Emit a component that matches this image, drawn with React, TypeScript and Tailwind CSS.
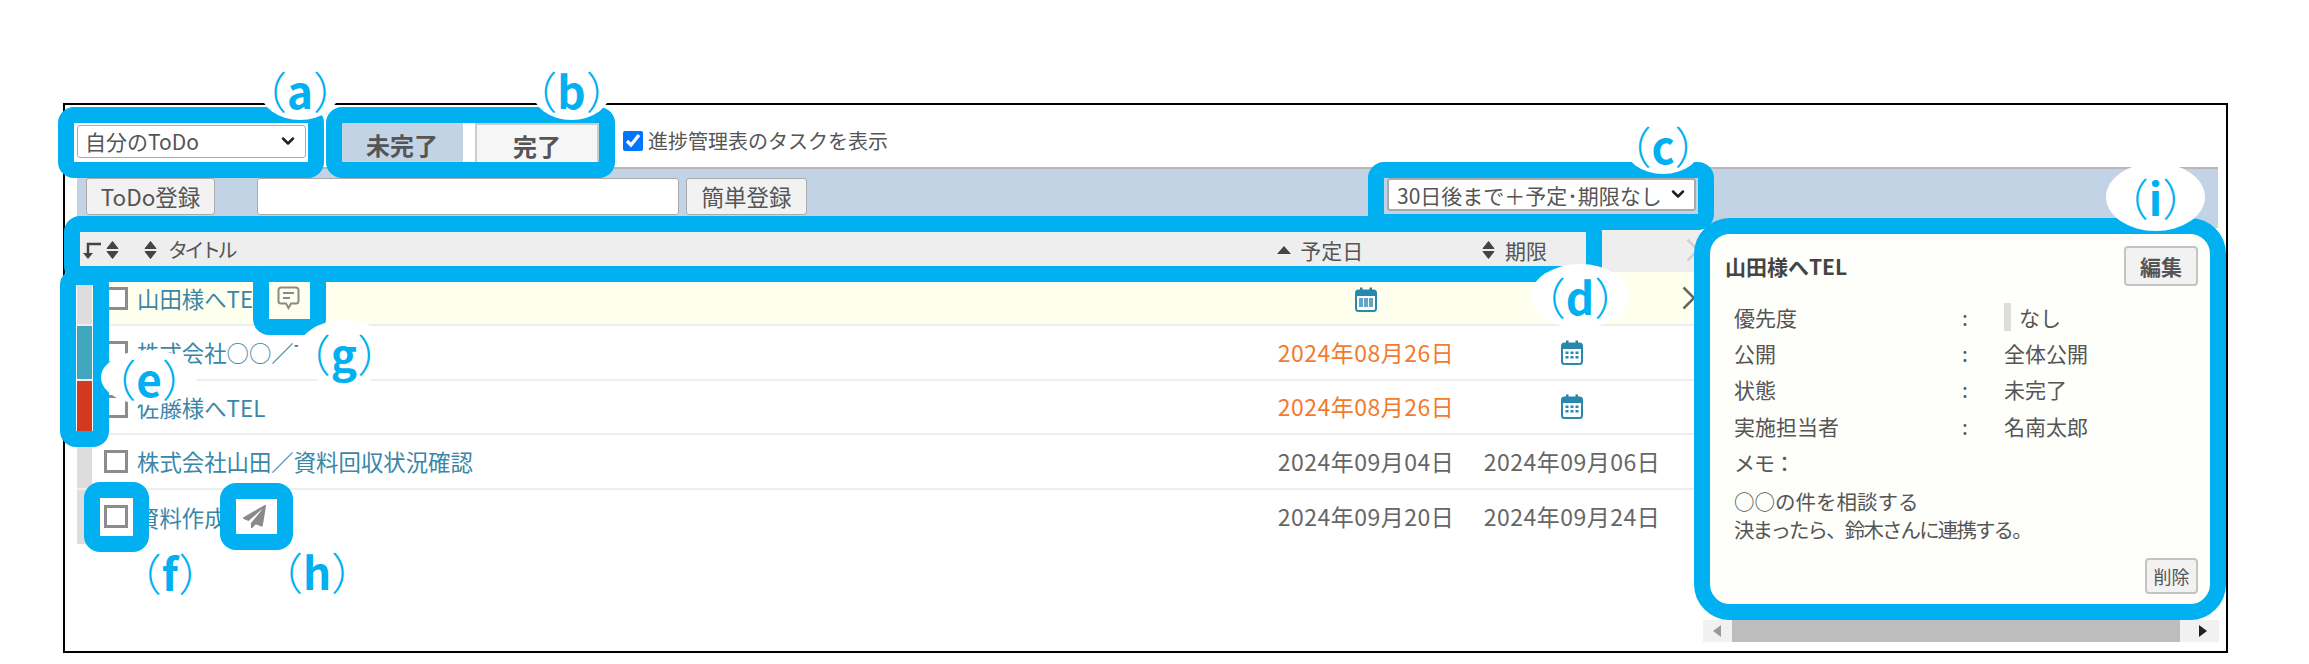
import { ChevronDown } from "lucide-react";
import { FaPaperPlane } from "react-icons/fa";

const SortIcon = () => (
    <svg width="13" height="20" viewBox="0 0 13 20" fill="#444" stroke="#444" strokeWidth="1" strokeLinejoin="round">
        <path d="M6.5 1.5 L12 8.5 H1 Z" />
        <path d="M6.5 18.5 L12 11.5 H1 Z" />
    </svg>
);

const CalendarIcon = ({ dense }: { dense?: boolean }) => (
    <svg width="22" height="25" viewBox="0 0 22 25">
        <rect x="5" y="0.5" width="2.5" height="5" fill="#2b7fa3" />
        <rect x="14.5" y="0.5" width="2.5" height="5" fill="#2b7fa3" />
        <rect x="1" y="3.5" width="20" height="20.5" rx="2.5" fill="#fff" stroke="#2b88ad" strokeWidth="2" />
        <rect x="1" y="3.5" width="20" height="5.5" fill="#2b88ad" />
        {dense ? (
            <g fill="#2b88ad">
                <rect x="4.5" y="11.5" width="3" height="2.5" />
                <rect x="9.5" y="11.5" width="3" height="2.5" />
                <rect x="14.5" y="11.5" width="3" height="2.5" />
                <rect x="4.5" y="16" width="3" height="2.5" />
                <rect x="9.5" y="16" width="3" height="2.5" />
                <rect x="14.5" y="16" width="3" height="2.5" />
            </g>
        ) : (
            <g fill="#5fa7c4">
                <rect x="4" y="11" width="14" height="9" />
                <rect x="8" y="11" width="1" height="9" fill="#fff" />
                <rect x="13" y="11" width="1" height="9" fill="#fff" />
            </g>
        )}
    </svg>
);

const Chevron = ({ color }: { color: string }) => (
    <svg width="14" height="24" viewBox="0 0 14 24" fill="none" stroke={color} strokeWidth="2.5">
        <path d="M1.5 1.5 L12 12 L1.5 22.5" />
    </svg>
);

const ChatIcon = () => (
    <svg width="23" height="24" viewBox="0 0 23 24" fill="none" stroke="#8a8a8a" strokeWidth="2">
        <path d="M4 1.5 H19 A2.5 2.5 0 0 1 21.5 4 V15 A2.5 2.5 0 0 1 19 17.5 H14 L11.5 22 L9 17.5 H4 A2.5 2.5 0 0 1 1.5 15 V4 A2.5 2.5 0 0 1 4 1.5 Z" />
        <path d="M6 7 H17 M6 12 H13" />
    </svg>
);

const Check = () => (
    <input
        type="checkbox"
        className="block appearance-none w-[24px] h-[23px] border-[3px] border-[#8c8c8c] bg-white shrink-0"
    />
);

const Label = ({ letter, className }: { letter: string; className: string }) => (
    <div
        className={`absolute flex items-center justify-center rounded-[50%] bg-white text-[#00b0f0] text-[44px] leading-none ${className}`}
    >
        <span className="font-light -ml-[22px]">（</span>
        <span className="font-bold">{letter}</span>
        <span className="font-light -mr-[22px]">）</span>
    </div>
);

const rows = [
    { title: "山田様へTEL", bar: "bg-[#dddddd]", bg: "bg-[#ffffee]", due: "", limit: "" },
    { title: "株式会社○○／TEL", bar: "bg-[#3fa6bd]", bg: "bg-white", due: "2024年08月26日", limit: "" },
    { title: "佐藤様へTEL", bar: "bg-[#d13a1e]", bg: "bg-white", due: "2024年08月26日", limit: "" },
    { title: "株式会社山田／資料回収状況確認", bar: "bg-[#dddddd]", bg: "bg-white", due: "2024年09月04日", limit: "2024年09月06日" },
    { title: "資料作成", bar: "bg-[#dddddd]", bg: "bg-white", due: "2024年09月20日", limit: "2024年09月24日" },
];

const details = [
    { label: "優先度", value: "なし", mark: true },
    { label: "公開", value: "全体公開" },
    { label: "状態", value: "未完了" },
    { label: "実施担当者", value: "名南太郎" },
];

const App = () => {
    return (
        <div className="relative w-[2309px] h-[664px] overflow-hidden bg-white pt-[103px] pl-[63px] font-['Noto_Sans_CJK_JP',sans-serif] text-[#555]">
            <div className="w-[2165px] h-[550px] border-2 border-black pl-[12px]">
                {/* filter row */}
                <div className="flex h-[62px] items-end">
                    <div className="relative mb-[9px] w-[229px]">
                        <select className="block h-[33px] w-full appearance-none rounded-[3px] border border-[#aaa] bg-white pl-[7px] text-[21px] text-[#555]">
                            <option>自分のToDo</option>
                        </select>
                        <ChevronDown size={20} strokeWidth={3} className="absolute right-[8px] top-[6px] text-[#222]" />
                    </div>
                    <div className="ml-[35px] flex h-[44px] w-[122px] items-center justify-center bg-[#c2d3e6] text-[24px] font-bold text-[#555]">
                        未完了
                    </div>
                    <div className="ml-[12px] flex h-[44px] w-[124px] items-center justify-center border-2 border-b-0 border-[#ccc] bg-[#f6f6f6] text-[24px] font-bold text-[#555]">
                        完了
                    </div>
                    <label className="ml-[24px] mb-[16px] flex items-center gap-[5px] text-[20px] leading-none">
                        <input type="checkbox" defaultChecked className="w-[20px] h-[20px]" />
                        進捗管理表のタスクを表示
                    </label>
                </div>

                {/* register row */}
                <div className="flex h-[61px] w-[2141px] items-start border-t-2 border-[#b8b8b8] bg-[#c2d3e6] pl-[9px] pt-[9px]">
                    <button className="h-[37px] w-[129px] rounded-[3px] border border-[#aaa] bg-[#f2f2f2] text-[22.5px] leading-none">
                        ToDo登録
                    </button>
                    <input className="ml-[42px] h-[37px] w-[422px] rounded-[3px] border border-[#aaa] bg-white" />
                    <button className="ml-[7px] h-[37px] w-[121px] rounded-[3px] border border-[#aaa] bg-[#f2f2f2] text-[22.5px] leading-none">
                        簡単登録
                    </button>
                    <div className="relative ml-[580px] w-[309px]">
                        <select className="block h-[33px] w-full appearance-none rounded-[3px] border-2 border-[#aaa] bg-white pl-[8px] text-[21px] text-[#555]">
                            <option>30日後まで＋予定･期限なし</option>
                        </select>
                        <ChevronDown size={20} strokeWidth={3} className="absolute right-[8px] top-[6px] text-[#222]" />
                    </div>
                </div>

                <div className="flex">
                    {/* task list */}
                    <div className="w-[1623px]">
                        <div className="flex h-[44px] items-center bg-[#eeeeee] text-[20px] leading-none">
                            <svg className="ml-[4px]" width="22" height="20" viewBox="0 0 22 20" fill="none" stroke="#444" strokeWidth="2.5">
                                <path d="M20 4 H7 V14" />
                                <path d="M2 13 H12 L7 19 Z" fill="#444" stroke="none" />
                            </svg>
                            <span className="ml-[3px]"><SortIcon /></span>
                            <span className="ml-[25px]"><SortIcon /></span>
                            <span className="ml-[11px] w-[1110px] tracking-[-3.5px]">タイトル</span>
                            <svg width="14" height="8" viewBox="0 0 14 8" fill="#444">
                                <path d="M7 0 L14 8 H0 Z" />
                            </svg>
                            <span className="ml-[9px] w-[182px] text-[21px]">予定日</span>
                            <SortIcon />
                            <span className="ml-[10px] w-[181px] text-[21px]">期限</span>
                            <Chevron color="#cfcfcf" />
                        </div>
                        {rows.map((row, i) => (
                            <div
                                key={i}
                                className={`flex h-[54.4px] items-center ${i < 4 ? "border-b-2 border-[#eeeeee]" : ""} ${row.bg}`}
                            >
                                <div className={`h-full w-[15px] shrink-0 ${row.bar}`} />
                                <div className="ml-[12px]"><Check /></div>
                                <div className="ml-[9px] flex w-[1141px] items-center text-[22.4px] leading-none text-[#3a86a8]">
                                    {row.title}
                                    {i === 0 && <span className="ml-[12px]"><ChatIcon /></span>}
                                    {i === 4 && <FaPaperPlane className="ml-[16px] text-[23px] text-[#8a8a8a]" />}
                                </div>
                                <div className={`flex w-[176px] justify-center text-[23px] leading-none tracking-[0.5px] whitespace-nowrap ${i < 3 ? "text-[#f47a2e]" : "text-[#666]"}`}>
                                    {i === 0 ? <span className="mt-[3px]"><CalendarIcon /></span> : row.due}
                                </div>
                                <div className="ml-[30px] flex w-[176px] justify-center text-[23px] leading-none tracking-[0.5px] whitespace-nowrap text-[#666]">
                                    {i === 1 || i === 2 ? <CalendarIcon dense /> : row.limit}
                                </div>
                                {i === 0 && <div className="ml-[22px]"><Chevron color="#666" /></div>}
                            </div>
                        ))}
                    </div>

                    {/* detail pane */}
                    <div className="ml-[3px] flex h-[414px] w-[516px] flex-col">
                        <div className="h-[392px] bg-[#fefefb] pt-[18px] text-[21px] leading-none">
                            <div className="flex items-center justify-between pl-[22px] pr-[21px]">
                                <span className="font-bold text-[#444]">山田様へTEL</span>
                                <button className="h-[40px] w-[74px] rounded-[4px] border-2 border-[#c4c4c4] bg-[#f2f2f2] font-bold">
                                    編集
                                </button>
                            </div>
                            <div className="mt-[13px] pl-[31px]">
                                {details.map((d) => (
                                    <div key={d.label} className="flex h-[36.4px] items-center">
                                        <span className="w-[228px]">{d.label}</span>
                                        <span className="w-[42px]">:</span>
                                        {d.mark && <span className="mr-[8px] h-[28px] w-[7px] bg-[#dddddd]" />}
                                        <span>{d.value}</span>
                                    </div>
                                ))}
                                <div className="flex h-[36px] items-center tracking-[-1px]">メモ：</div>
                                <p className="mt-[6px] text-[20.5px] leading-[28px]">
                                    ○○の件を相談する
                                    <br />
                                    <span className="tracking-[-1.9px]">決まったら、鈴木さんに連携する。</span>
                                </p>
                            </div>
                            <div className="mt-[15px] flex justify-end pr-[21px]">
                                <button className="h-[36px] w-[53px] rounded-[4px] border-2 border-[#c4c4c4] bg-[#f2f2f2] text-[18px]">
                                    削除
                                </button>
                            </div>
                        </div>
                        <div className="flex h-[22px] items-center bg-[#f1f1f1]">
                            <svg className="ml-[10px]" width="8" height="12" viewBox="0 0 8 12" fill="#9a9a9a">
                                <path d="M8 0 V12 L0 6 Z" />
                            </svg>
                            <div className="ml-[11px] h-full w-[448px] bg-[#bdbdbd]" />
                            <svg className="ml-[19px]" width="8" height="12" viewBox="0 0 8 12" fill="#222">
                                <path d="M0 0 V12 L8 6 Z" />
                            </svg>
                        </div>
                    </div>
                </div>
            </div>

            {/* annotation boxes */}
            <div className="absolute left-[58px] top-[107px] h-[71px] w-[266px] rounded-[16px] border-[16px] border-[#00b0f0]" />
            <div className="absolute left-[326px] top-[107px] h-[71px] w-[289px] rounded-[16px] border-[16px] border-[#00b0f0]" />
            <div className="absolute left-[1368px] top-[162px] h-[68px] w-[346px] rounded-[16px] border-[16px] border-[#00b0f0]" />
            <div className="absolute left-[64px] top-[216px] h-[66px] w-[1538px] rounded-[16px] border-[16px] border-[#00b0f0]" />
            <div className="absolute left-[60px] top-[269px] h-[178px] w-[49px] rounded-[16px] border-[16px] border-[#00b0f0]" />
            <div className="absolute left-[84px] top-[482px] h-[70px] w-[65px] rounded-[16px] border-[16px] border-[#00b0f0]" />
            <div className="absolute left-[253px] top-[266px] h-[69px] w-[73px] rounded-[16px] border-[16px] border-[#00b0f0]" />
            <div className="absolute left-[220px] top-[483px] h-[67px] w-[73px] rounded-[16px] border-[16px] border-[#00b0f0]" />
            <div className="absolute left-[1694px] top-[218px] h-[402px] w-[532px] rounded-[36px] border-[16px] border-[#00b0f0]" />

            <Label letter="a" className="left-[260px] top-[60px] h-[60px] w-[80px]" />
            <Label letter="b" className="left-[532px] top-[60px] h-[60px] w-[79px]" />
            <Label letter="c" className="left-[1624px] top-[116px] h-[58px] w-[78px]" />
            <Label letter="d" className="left-[1531px] top-[264px] h-[64px] w-[98px]" />
            <Label letter="e" className="left-[101px] top-[350px] h-[55px] w-[96px]" />
            <Label letter="f" className="left-[127px] top-[546px] h-[52px] w-[86px]" />
            <Label letter="g" className="left-[297px] top-[320px] h-[66px] w-[94px]" />
            <Label letter="h" className="left-[272px] top-[544px] h-[54px] w-[90px]" />
            <Label letter="i" className="left-[2106px] top-[163px] h-[68px] w-[99px]" />
        </div>
    );
};

export default App;
